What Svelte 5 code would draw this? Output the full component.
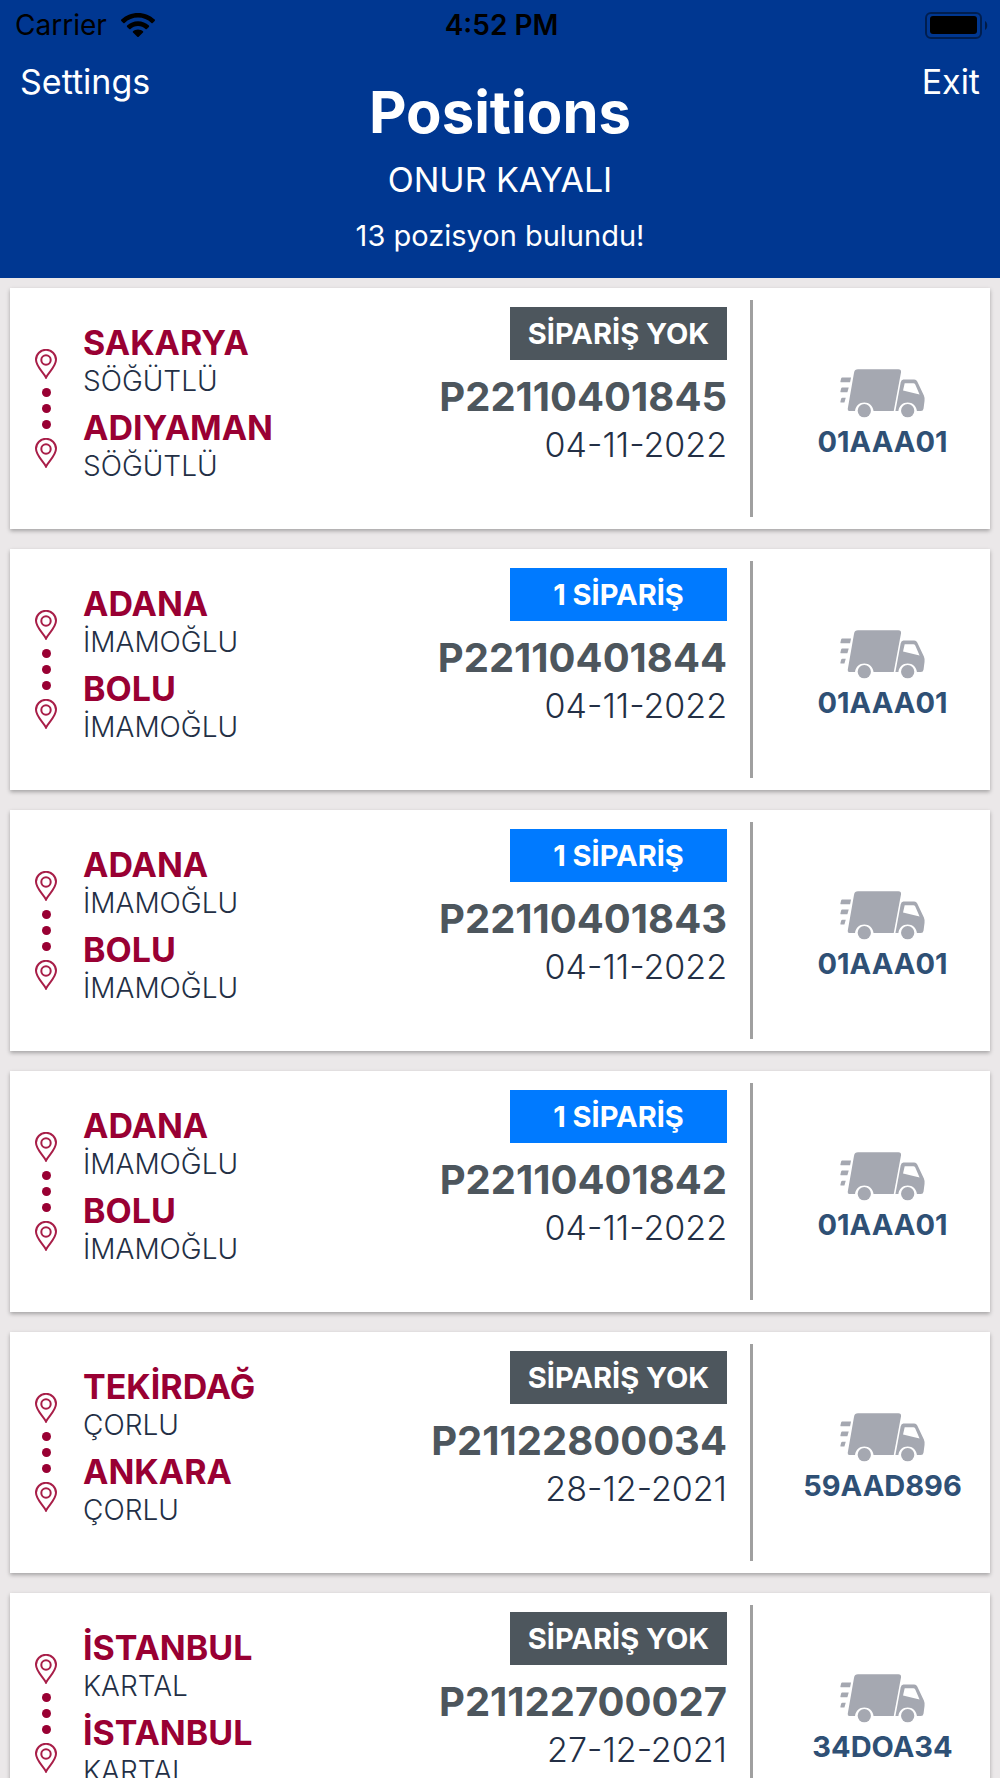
<script>
  const title = 'Positions';
  const driver = 'ONUR KAYALI';
  const total = 13;

  const positions = [
    { no: 'P22110401845', date: '04-11-2022', orders: 0, plate: '01AAA01', from: ['SAKARYA', 'SÖĞÜTLÜ'], to: ['ADIYAMAN', 'SÖĞÜTLÜ'] },
    { no: 'P22110401844', date: '04-11-2022', orders: 1, plate: '01AAA01', from: ['ADANA', 'İMAMOĞLU'], to: ['BOLU', 'İMAMOĞLU'] },
    { no: 'P22110401843', date: '04-11-2022', orders: 1, plate: '01AAA01', from: ['ADANA', 'İMAMOĞLU'], to: ['BOLU', 'İMAMOĞLU'] },
    { no: 'P22110401842', date: '04-11-2022', orders: 1, plate: '01AAA01', from: ['ADANA', 'İMAMOĞLU'], to: ['BOLU', 'İMAMOĞLU'] },
    { no: 'P21122800034', date: '28-12-2021', orders: 0, plate: '59AAD896', from: ['TEKİRDAĞ', 'ÇORLU'], to: ['ANKARA', 'ÇORLU'] },
    { no: 'P21122700027', date: '27-12-2021', orders: 0, plate: '34DOA34', from: ['İSTANBUL', 'KARTAL'], to: ['İSTANBUL', 'KARTAL'] }
  ];
</script>

{#snippet pin()}
  <svg class="pin" viewBox="0 0 22 30" aria-hidden="true">
    <path d="M11 28.6C9 23.8 1 17.6 1 10.8a10 10 0 0 1 20 0C21 17.6 13 23.8 11 28.6z" />
    <circle cx="11" cy="11" r="4.7" />
  </svg>
{/snippet}

{#snippet place([city, district])}
  <div class="place">
    <div class="city">{city}</div>
    <div class="district">{district}</div>
  </div>
{/snippet}

<div class="screen">
  <header>
    <div class="status-bar">
      <div class="carrier">
        <span>Carrier</span>
        <svg class="wifi" viewBox="0 0 34 25" aria-hidden="true">
          <path d="M17 0C10.500 0 4.600 2.500.3 6.600c-.4.4-.4.9 0 1.300l2 2c.4.4.9.4 1.300 0C7.200 6.500 11.900 4.600 17 4.600s9.800 1.900 13.400 5.300c.4.4.9.4 1.300 0l2-2c.4-.4.4-.9 0-1.300C29.400 2.500 23.500 0 17 0z" />
          <path d="M17 8.300c-4.200 0-8 1.600-10.900 4.300-.4.4-.4.9 0 1.300l2.100 2c.4.4.9.400 1.300 0C11.500 14.100 14.100 13 17 13s5.500 1.100 7.500 2.900c.4.4.9.4 1.300 0l2.100-2c.4-.4.4-.9 0-1.300C25 9.900 21.200 8.300 17 8.300z" />
          <path d="M17 16.500c-2 0-3.700.7-5 1.800-.4.4-.4.9 0 1.300l4.300 4.200c.4.4 1 .4 1.400 0l4.300-4.200c.4-.4.4-.9 0-1.300-1.300-1.100-3-1.800-5-1.800z" />
        </svg>
      </div>
      <time>4:52 PM</time>
      <svg class="battery" viewBox="0 0 63 27" aria-hidden="true">
        <rect x="1" y="1" width="55" height="25" rx="5" fill="none" stroke="#000" stroke-opacity=".45" stroke-width="2" />
        <rect x="5" y="4" width="47" height="18" rx="3" />
        <path d="M60 9c3 1.500 3 7.500 0 9z" fill-opacity=".5" />
      </svg>
    </div>
    <nav>
      <button type="button">Settings</button>
      <div class="heading">
        <h1>{title}</h1>
        <p class="driver">{driver}</p>
        <p class="count">{total} pozisyon bulundu!</p>
      </div>
      <button type="button" class="exit">Exit</button>
    </nav>
  </header>

  <main>
    {#each positions as p (p.no)}
      <article>
        <div class="route-line">
          {@render pin()}
          <div class="dots"><i></i><i></i><i></i></div>
          {@render pin()}
        </div>
        <div class="route">
          {@render place(p.from)}
          {@render place(p.to)}
        </div>
        <div class="info">
          <div class="badge" class:active={p.orders > 0}>
            {p.orders > 0 ? `${p.orders} SİPARİŞ` : 'SİPARİŞ YOK'}
          </div>
          <div class="number">{p.no}</div>
          <div class="date">{p.date}</div>
        </div>
        <div class="vehicle">
          <svg class="truck" viewBox="61 28 256 148" aria-hidden="true">
            <path d="M67 54h27l-3 14H63q-2 0-1-3l2-8q1-3 3-3z" />
            <path d="M67 84h20l-4 14H63q-2 0-1-3l2-8q1-3 3-3z" />
            <path d="M68 115h10l-4 14H63q-2 0-1-3l2-8q1-3 4-3z" />
            <path d="M115 29H237q9 0 8 9L223 155H162C160 138 149 129 134 129S108 138 106 155H89q-6 0-5-7L103 39q2-10 12-10z" />
            <path fill-rule="evenodd" d="M252 60H285q6 0 9 6L314 108Q317 115 316 124L313 147Q312 155 305 155H293C291 138 280 129 265 129S239 138 237 155H228L244 68q2-8 8-8zM256 71L251 93 301 105 288 75q-2-4-6-4z" />
            <circle cx="134" cy="154" r="20" />
            <circle cx="265" cy="154" r="20" />
          </svg>
          <div class="plate">{p.plate}</div>
        </div>
      </article>
    {/each}
  </main>
</div>

<style>
  :global(body) {
    background: #ebe8e9;
  }

  .screen {
    display: flex;
    flex-direction: column;
    height: 100vh;
    overflow: hidden;
    font-family: Inter, 'Liberation Sans', sans-serif;
    background: #ebe8e9;
  }

  header {
    flex: none;
    color: #fff;
    background: #003791;
  }

  .status-bar {
    display: grid;
    grid-template-columns: 1fr auto 1fr;
    align-items: center;
    height: 50px;
    padding: 0 12px 0 15px;
    font-size: 28px;
    color: #000;
  }

  .carrier {
    display: flex;
    align-items: center;
    gap: 14px;
  }

  .wifi {
    width: 34px;
    height: 25px;
  }

  time {
    font-weight: 600;
  }

  .battery {
    width: 63px;
    height: 27px;
    justify-self: end;
  }

  nav {
    display: grid;
    grid-template-columns: 1fr auto 1fr;
    align-items: start;
    padding: 12px 20px 22px;
  }

  button {
    justify-self: start;
    padding: 0;
    border: 0;
    font: inherit;
    font-size: 34px;
    line-height: 40px;
    color: inherit;
    background: none;
    cursor: pointer;
  }

  .exit {
    justify-self: end;
  }

  .heading {
    display: flex;
    flex-direction: column;
    gap: 16px;
    padding-top: 18px;
    text-align: center;
  }

  h1,
  p {
    margin: 0;
  }

  h1 {
    font-size: 58px;
    font-weight: 700;
    line-height: 64px;
  }

  .driver {
    font-size: 34px;
    line-height: 40px;
  }

  .count {
    font-size: 29px;
    line-height: 40px;
  }

  main {
    display: flex;
    flex: 1;
    flex-direction: column;
    gap: 20px;
    min-height: 0;
    padding: 10px;
    overflow-y: auto;
    scrollbar-width: none;
  }

  article {
    display: flex;
    flex: none;
    height: 241px;
    background: #fff;
    box-shadow: 0 2px 4px rgba(0, 0, 0, 0.3);
  }

  /* Pins joined by three dots */
  .route-line {
    display: flex;
    flex-direction: column;
    align-items: center;
    justify-content: center;
    gap: 9px;
    width: 22px;
    margin: 0 26px 0 25px;
  }

  .pin {
    width: 22px;
    height: 30px;
    fill: none;
    stroke: #a81e48;
    stroke-width: 2;
  }

  .dots {
    display: flex;
    flex-direction: column;
    gap: 7px;
  }

  .dots i {
    width: 9px;
    height: 9px;
    border-radius: 50%;
    background: #990033;
  }

  .route {
    display: flex;
    flex: 1;
    flex-direction: column;
    gap: 9px;
    padding-top: 35px;
  }

  .city {
    font-size: 34px;
    font-weight: 700;
    line-height: 40px;
    color: #990033;
  }

  .district {
    font-size: 28px;
    font-weight: 350;
    line-height: 36px;
    color: #232f45;
  }

  .info {
    display: flex;
    flex-direction: column;
    align-items: flex-end;
    padding: 19px 23px 0 0;
  }

  .badge {
    box-sizing: border-box;
    width: 217px;
    margin-bottom: 13px;
    font-size: 29px;
    font-weight: 700;
    line-height: 53px;
    text-align: center;
    color: #fff;
    background: #4d565d;
  }

  .badge.active {
    background: #007aff;
  }

  .number {
    font-size: 40px;
    font-weight: 700;
    line-height: 48px;
    color: #4d565d;
  }

  .date {
    font-size: 34px;
    font-weight: 350;
    line-height: 48px;
    color: #232f45;
  }

  .vehicle {
    display: flex;
    flex-direction: column;
    align-items: center;
    justify-content: center;
    gap: 6px;
    box-sizing: border-box;
    width: 240px;
    margin: 12px 0;
    padding: 12px 0 0 22px;
    border-left: 3px solid #a0a0a0;
  }

  .truck {
    width: 85px;
    height: 49px;
    fill: #a5a8b1;
  }

  .plate {
    font-size: 29px;
    font-weight: 700;
    line-height: 36px;
    color: #2f5075;
  }
</style>
